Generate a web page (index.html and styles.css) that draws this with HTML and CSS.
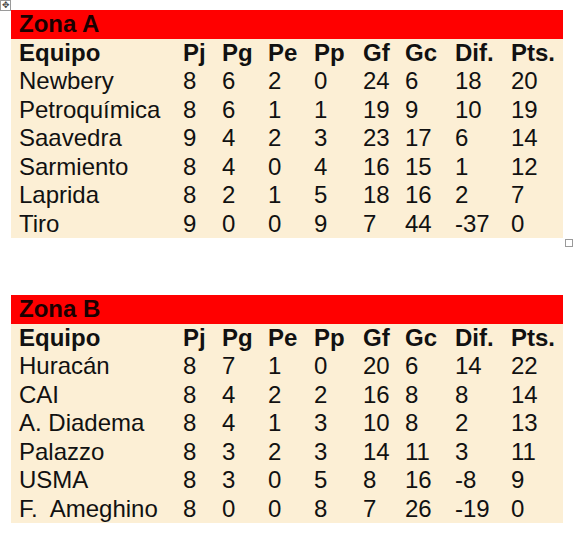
FILE: index.html
```html
<!DOCTYPE html>
<html lang="es">
<head>
<meta charset="utf-8">
<title>Zonas</title>
<link rel="stylesheet" href="styles.css">
</head>
<body>
<div class="page">
  <div class="block">
    <span class="move-handle">&#x2725;</span>
    <table class="standings">
      <colgroup>
        <col class="c-team"><col class="c-pj"><col class="c-pg"><col class="c-pe"><col class="c-pp"><col class="c-gf"><col class="c-gc"><col class="c-dif"><col class="c-pts">
      </colgroup>
      <tr class="zone"><td colspan="9">Zona A</td></tr>
      <tr class="head"><td>Equipo</td><td>Pj</td><td>Pg</td><td>Pe</td><td>Pp</td><td>Gf</td><td>Gc</td><td>Dif.</td><td>Pts.</td></tr>
      <tr><td>Newbery</td><td>8</td><td>6</td><td>2</td><td>0</td><td>24</td><td>6</td><td>18</td><td>20</td></tr>
      <tr><td>Petroquímica</td><td>8</td><td>6</td><td>1</td><td>1</td><td>19</td><td>9</td><td>10</td><td>19</td></tr>
      <tr><td>Saavedra</td><td>9</td><td>4</td><td>2</td><td>3</td><td>23</td><td>17</td><td>6</td><td>14</td></tr>
      <tr><td>Sarmiento</td><td>8</td><td>4</td><td>0</td><td>4</td><td>16</td><td>15</td><td>1</td><td>12</td></tr>
      <tr><td>Laprida</td><td>8</td><td>2</td><td>1</td><td>5</td><td>18</td><td>16</td><td>2</td><td>7</td></tr>
      <tr><td>Tiro</td><td>9</td><td>0</td><td>0</td><td>9</td><td>7</td><td>44</td><td>-37</td><td>0</td></tr>
    </table>
    <span class="resize-handle"></span>
  </div>

  <div class="block block-b">
    <table class="standings">
      <colgroup>
        <col class="c-team"><col class="c-pj"><col class="c-pg"><col class="c-pe"><col class="c-pp"><col class="c-gf"><col class="c-gc"><col class="c-dif"><col class="c-pts">
      </colgroup>
      <tr class="zone"><td colspan="9">Zona B</td></tr>
      <tr class="head"><td>Equipo</td><td>Pj</td><td>Pg</td><td>Pe</td><td>Pp</td><td>Gf</td><td>Gc</td><td>Dif.</td><td>Pts.</td></tr>
      <tr><td>Huracán</td><td>8</td><td>7</td><td>1</td><td>0</td><td>20</td><td>6</td><td>14</td><td>22</td></tr>
      <tr><td>CAI</td><td>8</td><td>4</td><td>2</td><td>2</td><td>16</td><td>8</td><td>8</td><td>14</td></tr>
      <tr><td>A. Diadema</td><td>8</td><td>4</td><td>1</td><td>3</td><td>10</td><td>8</td><td>2</td><td>13</td></tr>
      <tr><td>Palazzo</td><td>8</td><td>3</td><td>2</td><td>3</td><td>14</td><td>11</td><td>3</td><td>11</td></tr>
      <tr><td>USMA</td><td>8</td><td>3</td><td>0</td><td>5</td><td>8</td><td>16</td><td>-8</td><td>9</td></tr>
      <tr><td>F.&nbsp; Ameghino</td><td>8</td><td>0</td><td>0</td><td>8</td><td>7</td><td>26</td><td>-19</td><td>0</td></tr>
    </table>
  </div>
</div>
</body>
</html>
```

FILE: styles.css
```css
html, body {
  margin: 0;
  padding: 0;
  background: #ffffff;
}

.page {
  padding: 10px 0 0 11px;
  font-family: "Liberation Sans", Arial, sans-serif;
  color: #111111;
}

.block {
  position: relative;
  width: 552px;
}

.block-b {
  margin-top: 57px;
}

.standings {
  width: 552px;
  border-collapse: collapse;
  table-layout: fixed;
  font-size: 24px;
  background: #fcefd5;
}

.standings td {
  padding: 0 0 0 8px;
  height: 28.5px;
  line-height: 28px;
  white-space: nowrap;
  vertical-align: middle;
}

.c-team { width: 164px; }
.c-pj { width: 39px; }
.c-pg { width: 46px; }
.c-pe { width: 46px; }
.c-pp { width: 49px; }
.c-gf { width: 42px; }
.c-gc { width: 50px; }
.c-dif { width: 56px; }
.c-pts { width: 60px; }

.zone td {
  background: #ff0000;
  font-weight: bold;
  color: #1a0000;
}

.head td {
  font-weight: bold;
}

.move-handle {
  position: absolute;
  left: -11px;
  top: -10px;
  width: 9px;
  height: 9px;
  border: 1px solid #9a9a9a;
  background: #ffffff;
  font-size: 9px;
  line-height: 9px;
  text-align: center;
  color: #444;
}

.resize-handle {
  position: absolute;
  right: -10px;
  bottom: -9px;
  width: 6px;
  height: 6px;
  border: 1px solid #9a9a9a;
  background: #ffffff;
}
```
